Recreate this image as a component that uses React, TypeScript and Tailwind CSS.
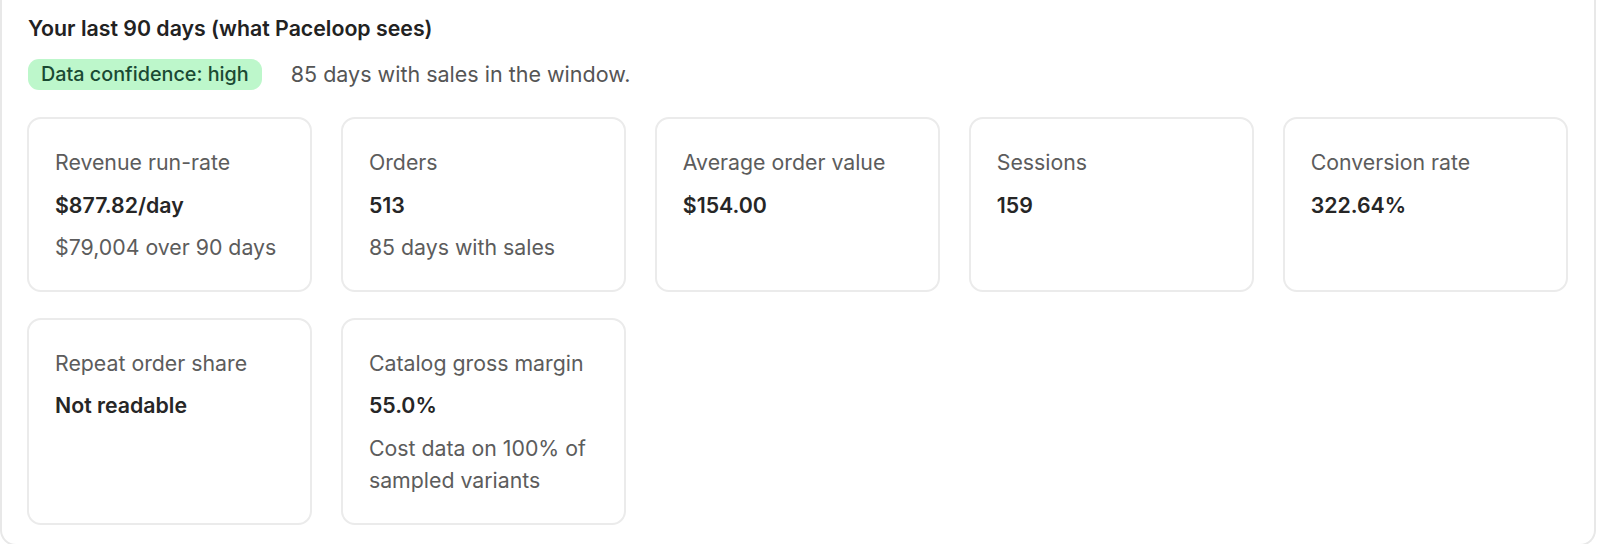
import React from "react";

type Metric = { label: string; value: string; sub?: string };

const metrics: Metric[] = [
  { label: "Revenue run-rate", value: "$877.82/day", sub: "$79,004 over 90 days" },
  { label: "Orders", value: "513", sub: "85 days with sales" },
  { label: "Average order value", value: "$154.00" },
  { label: "Sessions", value: "159" },
  { label: "Conversion rate", value: "322.64%" },
  { label: "Repeat order share", value: "Not readable" },
  { label: "Catalog gross margin", value: "55.0%", sub: "Cost data on 100% of sampled variants" },
];

function Card({ m }: { m: Metric }) {
  return (
    <div className="rounded-[14px] border-2 border-[#ebebeb] bg-white px-[26px] pt-[27px] pb-[26px] flex flex-col gap-[10px]">
      <div className="text-[21.3px] leading-[32.5px] text-[#5c5c5c]">{m.label}</div>
      <div className="text-[21.3px] leading-[32.5px] font-semibold text-[#262626]">{m.value}</div>
      {m.sub && <div className="text-[21.3px] leading-[32.5px] text-[#5c5c5c]">{m.sub}</div>}
    </div>
  );
}

export default function App() {
  return (
    <div className="w-[1600px] h-[544px] bg-white overflow-hidden" style={{ fontFamily: "Inter, 'Noto Sans', sans-serif" }}>
      <div className="w-[1596px] h-[546px] bg-white border-x-2 border-b-2 border-[#e8e8e8] rounded-b-[16px] pl-[25px] pr-[26px] pt-[14px]">
        <h2 className="text-[21.3px] leading-[29px] font-semibold text-[#222222] pl-[1px]">
          Your last 90 days (what Paceloop sees)
        </h2>
        <div className="mt-[16px] flex items-center gap-[29px] h-[31px] pl-[1px]">
          <span className="inline-flex items-center h-[31px] px-[13px] rounded-[11px] bg-[#bdf7cb] text-[19.8px] font-medium text-[#1a4a33]">
            Data confidence: high
          </span>
          <span className="text-[21.5px] text-[#555555]">85 days with sales in the window.</span>
        </div>
        <div className="mt-[27px] grid grid-cols-5 gap-x-[28.6px] gap-y-[26px]">
          {metrics.map((m) => (
            <Card key={m.label} m={m} />
          ))}
        </div>
      </div>
    </div>
  );
}
